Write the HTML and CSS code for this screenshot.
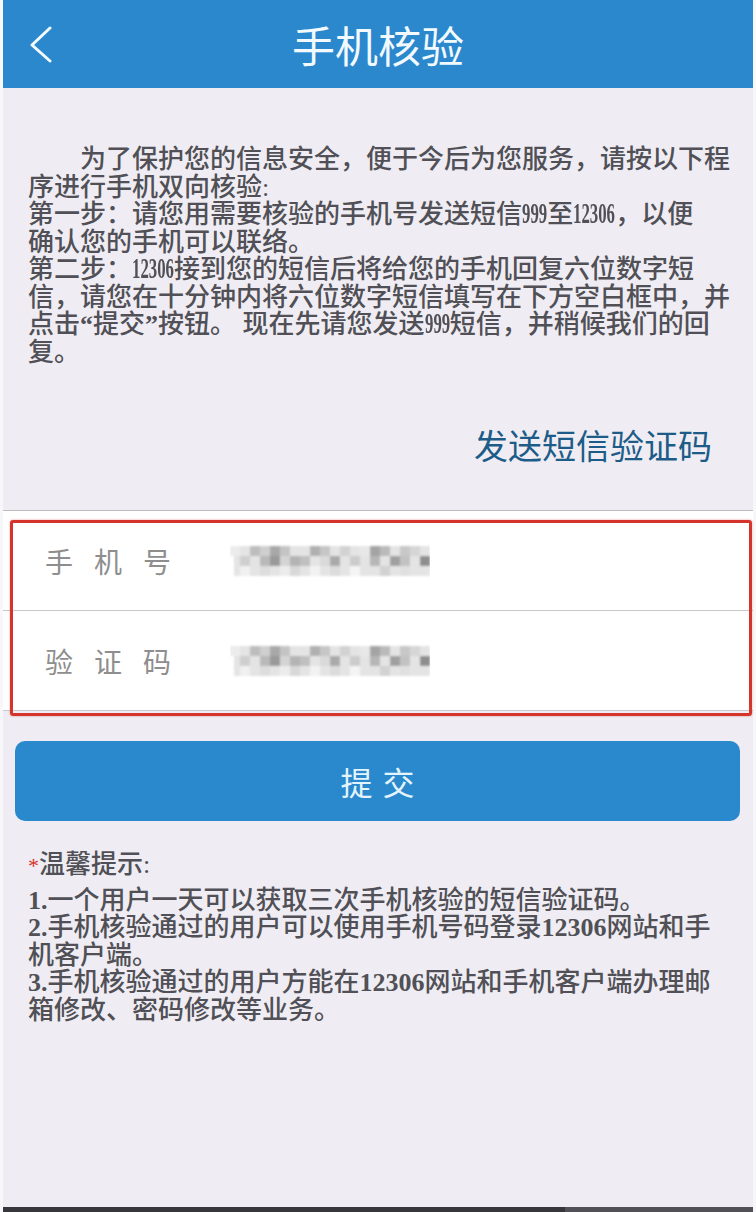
FILE: index.html
```html
<!DOCTYPE html>
<html lang="zh-CN">
<head>
    <meta charset="UTF-8">
    <meta name="viewport" content="width=device-width, initial-scale=1.0">
    <title>手机核验</title>
    <link rel="stylesheet" href="styles.css">
</head>
<body>
    <div class="page">
        <header class="topbar">
            <a href="#" class="back">
                <svg width="24" height="38" viewBox="0 0 24 38">
                    <polyline points="21,2 3,19 21,35" fill="none" stroke="#f4fbff" stroke-width="3" stroke-linecap="round" stroke-linejoin="round"/>
                </svg>
            </a>
            <h1 class="title">手机核验</h1>
            <span></span>
        </header>

        <section class="intro">
            <p class="notice">
                <span class="indent"></span>为了保护您的信息安全，便于今后为您服务，请按以下程<br>
                序进行手机双向核验:<br>
                第一步：请您用需要核验的手机号发送短信<span class="num num-3">999</span>至<span class="num num-5">12306</span>，以便<br>
                确认您的手机可以联络。<br>
                第二步：<span class="num num-5">12306</span>接到您的短信后将给您的手机回复六位数字短<br>
                信，请您在十分钟内将六位数字短信填写在下方空白框中，并<br>
                点击<span class="quote">“</span>提交<span class="quote">”</span>按钮。 现在先请您发送<span class="num num-3">999</span>短信，并稍候我们的回<br>
                复。
            </p>
            <div class="send-row">
                <a href="#" class="send-link">发送短信验证码</a>
            </div>
        </section>

        <div class="form">
            <div class="form-row">
                <span class="label">手机号</span>
                <svg class="mosaic" width="200" height="34" viewBox="0 0 200 34">
                    <defs>
                        <filter id="soft"><feGaussianBlur stdDeviation="0.9"/></filter>
                        <g id="cells" filter="url(#soft)">
                            <rect x="4" y="2" width="196" height="30" fill="#e4e4e4"/>
                            <rect x="0" y="2" width="10" height="10" fill="#ececec"/>
                            <rect x="20" y="2" width="10" height="10" fill="#bdbdbd"/>
                            <rect x="30" y="2" width="10" height="10" fill="#cfcfcf"/>
                            <rect x="40" y="2" width="10" height="10" fill="#a8a8a8"/>
                            <rect x="50" y="2" width="10" height="10" fill="#c4c4c4"/>
                            <rect x="80" y="2" width="10" height="10" fill="#b0b0b0"/>
                            <rect x="90" y="2" width="10" height="10" fill="#c6c6c6"/>
                            <rect x="110" y="2" width="10" height="10" fill="#d2d2d2"/>
                            <rect x="130" y="2" width="10" height="10" fill="#e8e8e8"/>
                            <rect x="140" y="2" width="10" height="10" fill="#a4a4a4"/>
                            <rect x="150" y="2" width="10" height="10" fill="#bababa"/>
                            <rect x="170" y="2" width="10" height="10" fill="#c8c8c8"/>
                            <rect x="180" y="2" width="10" height="10" fill="#d6d6d6"/>
                            <rect x="10" y="12" width="10" height="10" fill="#cfcfcf"/>
                            <rect x="30" y="12" width="10" height="10" fill="#b9b9b9"/>
                            <rect x="40" y="12" width="10" height="10" fill="#9a9a9a"/>
                            <rect x="50" y="12" width="10" height="10" fill="#d4d4d4"/>
                            <rect x="60" y="12" width="10" height="10" fill="#b4b4b4"/>
                            <rect x="70" y="12" width="10" height="10" fill="#c0c0c0"/>
                            <rect x="90" y="12" width="10" height="10" fill="#dadada"/>
                            <rect x="100" y="12" width="10" height="10" fill="#aaaaaa"/>
                            <rect x="120" y="12" width="10" height="10" fill="#cccccc"/>
                            <rect x="140" y="12" width="10" height="10" fill="#b6b6b6"/>
                            <rect x="160" y="12" width="10" height="10" fill="#a0a0a0"/>
                            <rect x="170" y="12" width="10" height="10" fill="#c2c2c2"/>
                            <rect x="190" y="12" width="10" height="10" fill="#8e8e8e"/>
                            <rect x="10" y="22" width="10" height="10" fill="#f0f0f0"/>
                            <rect x="30" y="22" width="10" height="10" fill="#dddddd"/>
                            <rect x="50" y="22" width="10" height="10" fill="#ececec"/>
                            <rect x="60" y="22" width="10" height="10" fill="#d8d8d8"/>
                            <rect x="80" y="22" width="10" height="10" fill="#f2f2f2"/>
                            <rect x="100" y="22" width="10" height="10" fill="#dcdcdc"/>
                            <rect x="120" y="22" width="10" height="10" fill="#f4f4f4"/>
                            <rect x="150" y="22" width="10" height="10" fill="#d2d2d2"/>
                            <rect x="170" y="22" width="10" height="10" fill="#e0e0e0"/>
                        </g>
                    </defs>
                    <use href="#cells"/>
                </svg>
            </div>
            <div class="form-row">
                <span class="label">验证码</span>
                <svg class="mosaic" width="200" height="34" viewBox="0 0 200 34">
                    <use href="#cells"/>
                </svg>
            </div>
            <div class="highlight"></div>
        </div>

        <button class="submit" type="button">提交</button>

        <section class="tips">
            <p class="tips-title"><span class="star">*</span>温馨提示:</p>
            <ol class="tips-list">
                <li><b>1.</b>一个用户一天可以获取三次手机核验的短信验证码。</li>
                <li><b>2.</b>手机核验通过的用户可以使用手机号码登录<b>12306</b>网站和手机客户端。</li>
                <li><b>3.</b>手机核验通过的用户方能在<b>12306</b>网站和手机客户端办理邮箱修改、密码修改等业务。</li>
            </ol>
        </section>
    </div>
    <div class="taskbar"></div>
</body>
</html>
```

FILE: styles.css
```css
/* Base */
* {
    margin: 0;
    padding: 0;
    box-sizing: border-box;
}

body {
    background: #f7f7f9;
    font-family: 'Noto Sans CJK SC', sans-serif;
}

.page {
    margin: 0 3px;
    min-height: 1207px;
    background: #efedf3;
}

/* Top bar */
.topbar {
    height: 88px;
    display: grid;
    grid-template-columns: 1fr auto 1fr;
    align-items: center;
    background: #2b88cd;
}

.back {
    display: flex;
    padding-left: 26px;
    padding-top: 2px;
}

.title {
    font-size: 43px;
    font-weight: normal;
    color: #f2faff;
    line-height: 88px;
}

/* Intro text */
.intro {
    padding: 58px 10px 38px 25px;
    border-bottom: 1px solid #bdbdc0;
}

.notice {
    font-family: 'Liberation Serif', 'Noto Sans CJK SC Medium', 'Noto Sans CJK SC', serif;
    font-size: 26px;
    font-weight: 500;
    line-height: 27.5px;
    color: #505056;
    white-space: nowrap;
}

.indent {
    display: inline-block;
    width: 52px;
}

/* condensed digits, like the app's font */
.num {
    display: inline-block;
    font-size: 30px;
    font-weight: bold;
    line-height: 20px;
    transform: scaleX(0.56);
    transform-origin: 0 0;
}

.num-3 {
    margin-right: -19.8px;
}

.num-5 {
    margin-right: -33px;
}

.quote {
    font-weight: bold;
}

.send-row {
    margin-top: 59px;
    padding-right: 31px;
    text-align: right;
    line-height: 40px;
}

.send-link {
    font-size: 34px;
    color: #1d5c88;
    text-decoration: none;
}

/* Form */
.form {
    position: relative;
    background: #fff;
}

.form-row {
    height: 100px;
    display: flex;
    align-items: center;
    padding-left: 42px;
    border-bottom: 1px solid #c8c8cc;
}

.label {
    width: 185px;
    font-size: 28px;
    letter-spacing: 21px;
    color: #8e8e8e;
}

.mosaic {
    display: block;
}

.highlight {
    position: absolute;
    top: 9px;
    bottom: -5px;
    left: 7px;
    right: 1px;
    border: 3px solid #d4342c;
    border-radius: 3px;
    box-shadow: 0 0 2px rgba(212, 52, 44, 0.6);
    pointer-events: none;
}

/* Submit button */
.submit {
    display: block;
    width: calc(100% - 25px);
    height: 80px;
    margin: 30px 13px 0 12px;
    padding-left: 10px;
    border: none;
    border-radius: 10px;
    background: #2a88cd;
    color: #e4f4fc;
    font-family: 'Noto Sans CJK SC', sans-serif;
    font-size: 32px;
    letter-spacing: 10px;
}

/* Tips */
.tips {
    margin-top: 30px;
    padding: 0 35px 0 25px;
    font-family: 'Liberation Serif', 'Noto Sans CJK SC Medium', 'Noto Sans CJK SC', serif;
    font-size: 26px;
    font-weight: 500;
    line-height: 27.5px;
    color: #505056;
}

.star {
    color: #d8312a;
    font-size: 22px;
}

.tips-list {
    list-style: none;
    margin-top: 7px;
}

.tips-list b {
    font-weight: bold;
}

.taskbar {
    height: 5px;
    margin: 0 3px;
    background: linear-gradient(to right, #36363b 75%, #505056 75%);
}
```
